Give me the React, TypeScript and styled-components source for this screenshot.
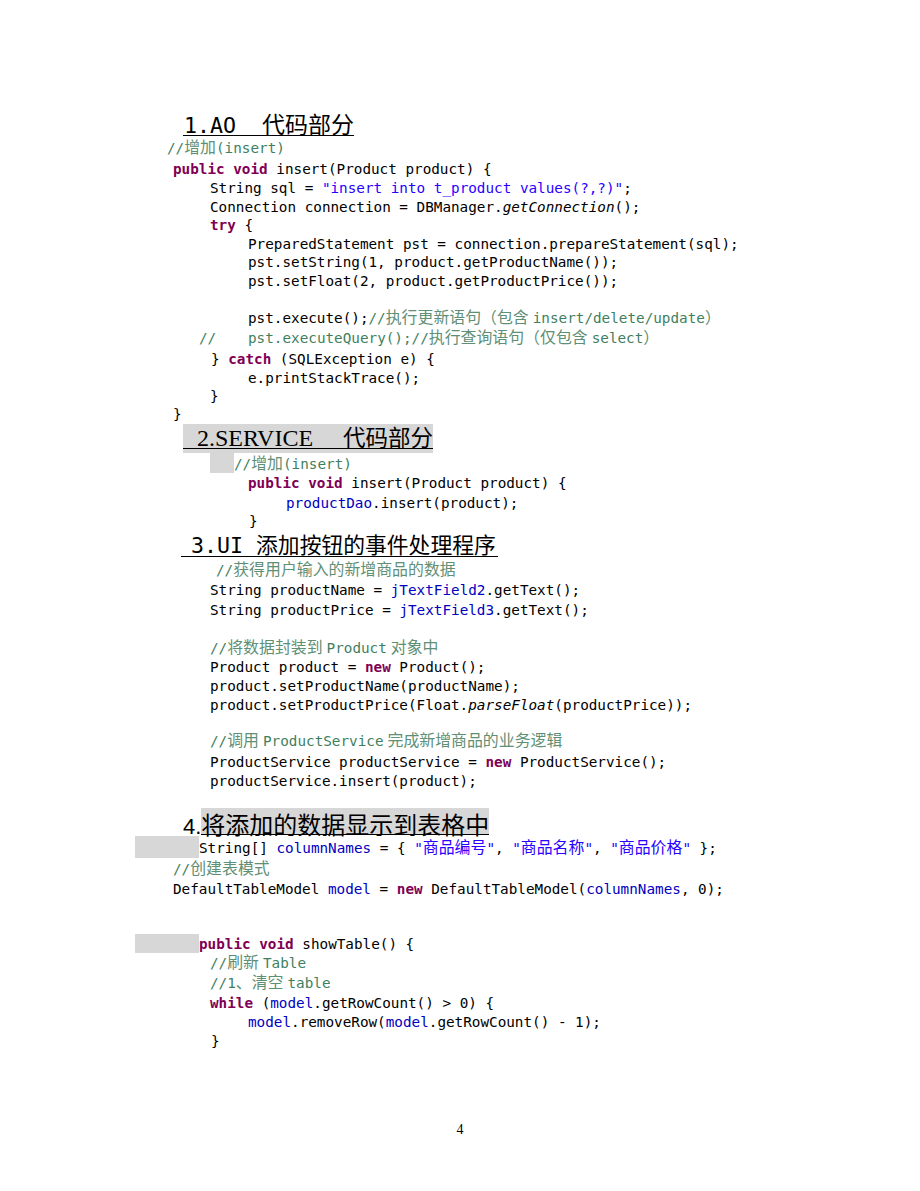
import React from 'react';
import styled, { createGlobalStyle } from 'styled-components';

const Global = createGlobalStyle`
  html, body { margin: 0; padding: 0; background: #ffffff; }
  body { font-family: "DejaVu Sans Mono", "Noto Sans CJK SC", monospace; }
`;

const Page = styled.div`
  width: 920px;
  height: 1191px;
  box-sizing: border-box;
  padding-top: 111px;
  padding-bottom: 51px;
  background: #ffffff;
  display: flex;
  flex-direction: column;
  color: #000000;
`;

const Line = styled.div<{ $x?: number; $h: number }>`
  height: ${(p) => p.$h}px;
  line-height: ${(p) => p.$h + 2}px;
  padding-left: ${(p) => p.$x ?? 0}px;
  white-space: pre;
  font-family: "DejaVu Sans Mono", "Noto Sans CJK SC", monospace;
  font-size: 14.3px;
  color: #000000;
`;

const Cjk = styled.span<{ $size: number }>`
  font-family: "Noto Sans CJK SC", sans-serif;
  font-size: ${(p) => p.$size}px;
  line-height: 0;
`;

const Thin = styled.span`
  display: inline-block;
  width: 4px;
`;

const Kw = styled.span`
  color: #7f0055;
  font-weight: bold;
`;
const Str = styled.span`
  color: #2a00ff;
`;
const Fld = styled.span`
  color: #0000c0;
`;
const Cmt = styled.span`
  color: #3f7f5f;
  ${Cjk} { color: #5f8f75; }
`;
const Ital = styled.span`
  font-style: italic;
`;

const Tab = styled.span<{ $w: number; $shade?: boolean }>`
  display: inline-block;
  width: ${(p) => p.$w}px;
  height: inherit;
  vertical-align: top;
  background: ${(p) => (p.$shade ? '#d7d7d7' : 'transparent')};
`;

const HeadRow = styled.div<{ $x: number; $h: number; $top: number }>`
  height: ${(p) => p.$h}px;
  box-sizing: border-box;
  padding-left: ${(p) => p.$x}px;
  padding-top: ${(p) => p.$top}px;
  display: flex;
  align-items: baseline;
  white-space: pre;
`;

const MonoHead = styled.span<{ $lh: number; $pad?: number }>`
  display: block;
  font-family: "DejaVu Sans Mono", monospace;
  font-size: 21.6px;
  line-height: ${(p) => p.$lh}px;
  padding-left: ${(p) => p.$pad ?? 0}px;
  border-bottom: 1.5px solid #000000;
`;

const SerifHead = styled.span`
  display: block;
  font-family: "Liberation Serif", serif;
  font-size: 24px;
  line-height: 19px;
  padding-left: 14px;
  border-bottom: 1.5px solid #000000;
`;

const CjkHead = styled.span`
  display: block;
  font-family: "Noto Sans CJK SC", sans-serif;
  font-size: 24px;
  line-height: 21px;
  border-bottom: 1.5px solid #000000;
`;

const Highlight = styled.span<{ $top: number; $bottom: number }>`
  display: block;
  background: #d7d7d7;
  padding-top: ${(p) => p.$top}px;
  padding-bottom: ${(p) => p.$bottom}px;
`;

const Gap = styled.span<{ $w: number }>`
  display: inline-block;
  width: ${(p) => p.$w}px;
`;

const Numeral = styled.span`
  font-family: "Liberation Sans", sans-serif;
  font-size: 22px;
`;

const Folio = styled.div`
  margin-top: auto;
  height: 20px;
  line-height: 20px;
  text-align: center;
  font-family: "Liberation Serif", serif;
  font-size: 14px;
`;

const CJK_TEST = /[\u3000-\u303f\u3400-\u9fff\uff00-\uffef]/;
const CJK_SPLIT = /([\u3000-\u303f\u3400-\u9fff\uff00-\uffef]+|\u2009)/;

function mix(text: string, size = 15.9): React.ReactNode[] {
  return text
    .split(CJK_SPLIT)
    .filter((s) => s.length > 0)
    .map((part, i) => {
      if (part === '\u2009') return <Thin key={i} />;
      if (CJK_TEST.test(part))
        return (
          <Cjk key={i} $size={size}>
            {part}
          </Cjk>
        );
      return <React.Fragment key={i}>{part}</React.Fragment>;
    });
}

export default function App() {
  return (
    <>
      <Global />
      <Page>
        <HeadRow $x={183} $h={26} $top={5.5}>
          <MonoHead $lh={18} $pad={1}>
            1.AO{'  '}
            <Cjk $size={23}>代码部分</Cjk>
          </MonoHead>
        </HeadRow>

        <Line $x={167} $h={21.5}>
          <Cmt>{mix('//增加(insert)')}</Cmt>
        </Line>
        <Line $x={173} $h={19.5}>
          <Kw>public</Kw> <Kw>void</Kw> insert(Product product) {'{'}
        </Line>
        <Line $x={210} $h={18.5}>
          String sql = <Str>"insert into t_product values(?,?)"</Str>;
        </Line>
        <Line $x={210} $h={18.5}>
          Connection connection = DBManager.<Ital>getConnection</Ital>();
        </Line>
        <Line $x={210} $h={18.5}>
          <Kw>try</Kw> {'{'}
        </Line>
        <Line $x={248} $h={18.5}>
          PreparedStatement pst = connection.prepareStatement(sql);
        </Line>
        <Line $x={248} $h={18.5}>
          pst.setString(1, product.getProductName());
        </Line>
        <Line $x={248} $h={18.5}>
          pst.setFloat(2, product.getProductPrice());
        </Line>
        <Line $h={18.5} />
        <Line $x={248} $h={19.5}>
          pst.execute();<Cmt>{mix('//执行更新语句（包含\u2009insert/delete/update）')}</Cmt>
        </Line>
        <Line $x={199} $h={20.5}>
          <Cmt>
            //
            <Tab $w={31.8} />
            {mix('pst.executeQuery();//执行查询语句（仅包含\u2009select）')}
          </Cmt>
        </Line>
        <Line $x={211} $h={20}>
          {'} '}
          <Kw>catch</Kw> (SQLException e) {'{'}
        </Line>
        <Line $x={248} $h={18.5}>
          e.printStackTrace();
        </Line>
        <Line $x={210} $h={18}>
          {'}'}
        </Line>
        <Line $x={173} $h={18}>
          {'}'}
        </Line>

        <HeadRow $x={183} $h={31} $top={2}>
          <Highlight $top={4.5} $bottom={4.5}>
            <SerifHead>
              2.SERVICE
              <Gap $w={30} />
              <Cjk $size={22.5}>代码部分</Cjk>
            </SerifHead>
          </Highlight>
        </HeadRow>

        <Line $x={210} $h={20}>
          <Tab $w={24} $shade />
          <Cmt>{mix('//增加(insert)')}</Cmt>
        </Line>
        <Line $x={248} $h={19.5}>
          <Kw>public</Kw> <Kw>void</Kw> insert(Product product) {'{'}
        </Line>
        <Line $x={286} $h={18.5}>
          <Fld>productDao</Fld>.insert(product);
        </Line>
        <Line $x={249} $h={19}>
          {'}'}
        </Line>

        <HeadRow $x={181} $h={28} $top={5}>
          <MonoHead $lh={21} $pad={10}>
            3.UI{' '}
            <Cjk $size={21.8}>添加按钮的事件处理程序</Cjk>
            <Gap $w={2} />
          </MonoHead>
        </HeadRow>

        <Line $x={216} $h={22}>
          <Cmt>{mix('//获得用户输入的新增商品的数据')}</Cmt>
        </Line>
        <Line $x={210} $h={19.5}>
          String productName = <Fld>jTextField2</Fld>.getText();
        </Line>
        <Line $x={210} $h={18.5}>
          String productPrice = <Fld>jTextField3</Fld>.getText();
        </Line>
        <Line $h={18.5} />
        <Line $x={210} $h={20}>
          <Cmt>{mix('//将数据封装到\u2009Product\u2009对象中')}</Cmt>
        </Line>
        <Line $x={210} $h={19.5}>
          Product product = <Kw>new</Kw> Product();
        </Line>
        <Line $x={210} $h={18.5}>
          product.setProductName(productName);
        </Line>
        <Line $x={210} $h={18.5}>
          product.setProductPrice(Float.<Ital>parseFloat</Ital>(productPrice));
        </Line>
        <Line $h={18} />
        <Line $x={210} $h={19.5}>
          <Cmt>{mix('//调用\u2009ProductService\u2009完成新增商品的业务逻辑')}</Cmt>
        </Line>
        <Line $x={210} $h={20}>
          ProductService productService = <Kw>new</Kw> ProductService();
        </Line>
        <Line $x={210} $h={19.5}>
          productService.insert(product);
        </Line>
        <Line $h={18} />

        <HeadRow $x={183} $h={28} $top={0}>
          <Numeral>4.</Numeral>
          <Highlight $top={4.5} $bottom={0.5}>
            <CjkHead>将添加的数据显示到表格中</CjkHead>
          </Highlight>
        </HeadRow>

        <Line $x={135} $h={22}>
          <Tab $w={64} $shade />
          String[] <Fld>columnNames</Fld> = {'{ '}
          <Str>{mix('"商品编号"')}</Str>, <Str>{mix('"商品名称"')}</Str>, <Str>{mix('"商品价格"')}</Str>
          {' };'}
        </Line>
        <Line $x={173} $h={20.5}>
          <Cmt>{mix('//创建表模式')}</Cmt>
        </Line>
        <Line $x={173} $h={19.5}>
          DefaultTableModel <Fld>model</Fld> = <Kw>new</Kw> DefaultTableModel(<Fld>columnNames</Fld>, 0);
        </Line>
        <Line $h={18} />
        <Line $h={18} />
        <Line $x={135} $h={18.5}>
          <Tab $w={64} $shade />
          <Kw>public</Kw> <Kw>void</Kw> showTable() {'{'}
        </Line>
        <Line $x={210} $h={19.5}>
          <Cmt>{mix('//刷新\u2009Table')}</Cmt>
        </Line>
        <Line $x={210} $h={20.5}>
          <Cmt>{mix('//1、清空\u2009table')}</Cmt>
        </Line>
        <Line $x={210} $h={19.5}>
          <Kw>while</Kw> (<Fld>model</Fld>.getRowCount() &gt; 0) {'{'}
        </Line>
        <Line $x={248} $h={18.5}>
          <Fld>model</Fld>.removeRow(<Fld>model</Fld>.getRowCount() - 1);
        </Line>
        <Line $x={211} $h={18.5}>
          {'}'}
        </Line>

        <Folio>4</Folio>
      </Page>
    </>
  );
}
